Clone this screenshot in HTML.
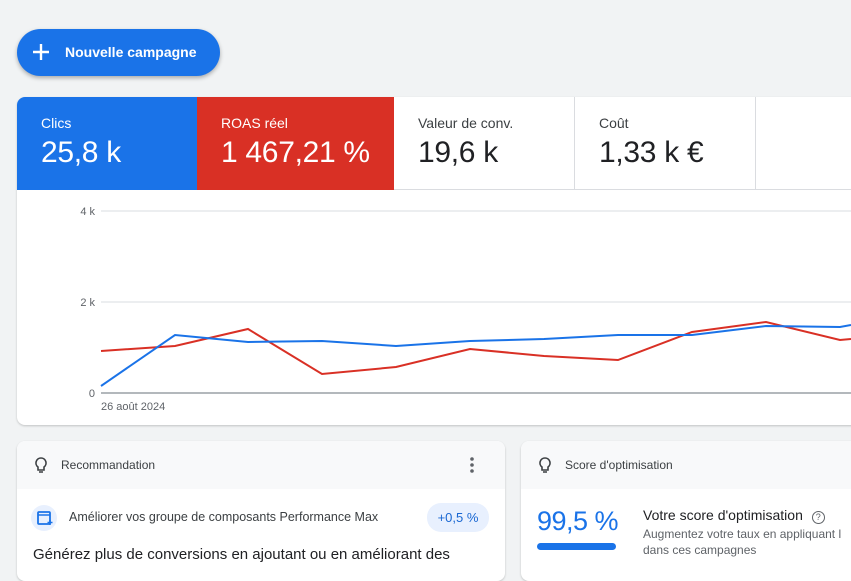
<!DOCTYPE html>
<html><head><meta charset="utf-8"><style>
*{box-sizing:border-box;margin:0;padding:0}
body{width:851px;height:564px;overflow:hidden;background:#f1f3f4;font-family:"Liberation Sans",Arial,sans-serif;position:relative}
.btn{position:absolute;left:17px;top:29px;width:203px;height:47px;border-radius:24px;background:#1a73e8;box-shadow:0 2px 4px rgba(0,0,0,.3);color:#fff;font-weight:bold;font-size:14px;line-height:47px;padding-left:48px}
.btn svg{position:absolute;left:15px;top:14px}
.card{position:absolute;left:17px;top:97px;width:850px;height:328px;background:#fff;border-radius:8px;overflow:hidden;box-shadow:0 1px 2px rgba(0,0,0,.2)}
.tile{position:absolute;top:0;height:93px;padding:18px 0 0 24px;border-right:1px solid #dadce0;border-bottom:1px solid #dadce0}
.tile .l{font-size:14px;color:#3c4043}
.tile .v{font-size:30px;color:#202124;margin-top:5px;letter-spacing:-0.3px}
.tile.c .l,.tile.c .v{color:#fff}
.small{position:absolute;background:#fff;border-radius:8px;overflow:hidden;box-shadow:0 1px 2px rgba(0,0,0,.2)}
.hd{height:48px;background:#f8f9fa;font-size:12px;color:#3c4043;line-height:48px;padding-left:44px;position:relative}
.hd svg{position:absolute;left:18px;top:16px}
</style></head><body>
<div class="btn"><svg width="18" height="18"><path d="M9 1v16M1 9h16" stroke="#fff" stroke-width="2.4"/></svg>Nouvelle campagne</div>
<div class="card">
<div class="tile c" style="left:0;width:180px;background:#1a73e8;border:none"><div class="l">Clics</div><div class="v">25,8 k</div></div>
<div class="tile c" style="left:180px;width:197px;background:#d93025;border:none"><div class="l">ROAS réel</div><div class="v">1 467,21 %</div></div>
<div class="tile" style="left:377px;width:181px"><div class="l">Valeur de conv.</div><div class="v">19,6 k</div></div>
<div class="tile" style="left:558px;width:181px"><div class="l">Coût</div><div class="v">1,33 k €</div></div>
<div class="tile" style="left:739px;width:120px"></div>
</div>
<svg style="position:absolute;left:0;top:0" width="851" height="430">
<g font-size="11" fill="#5f6368" font-family="Liberation Sans" text-anchor="end">
<text x="95" y="215">4 k</text><text x="95" y="306">2 k</text><text x="95" y="397">0</text></g>
<line x1="101" y1="211" x2="851" y2="211" stroke="#dadce0"/>
<line x1="101" y1="302" x2="851" y2="302" stroke="#dadce0"/>
<line x1="101" y1="393" x2="851" y2="393" stroke="#9aa0a6" stroke-width="1.5"/>
<text x="101" y="410" font-size="11" fill="#5f6368" font-family="Liberation Sans">26 août 2024</text>
<polyline fill="none" stroke="#d93025" stroke-width="2" points="101,351 175,346 248,329 322,374 396,367 470,349 544,356 618,360 692,332 766,322 840,340 851,339"/>
<polyline fill="none" stroke="#1a73e8" stroke-width="2" points="101,386 175,335 248,342 322,341 396,346 470,341 544,339 618,335 692,335 766,326 840,327 851,325"/>
</svg>
<div class="small" style="left:17px;top:441px;width:488px;height:140px">
<div class="hd"><svg width="12" height="18" viewBox="0 0 12 18"><path d="M6 1a5 5 0 0 0-3 9v3h6v-3a5 5 0 0 0-3-9z M4 15h4" fill="none" stroke="#3c4043" stroke-width="1.6"/></svg>Recommandation
<svg style="left:453px;top:16px" width="4" height="16"><circle cx="2" cy="2" r="1.8" fill="#5f6368"/><circle cx="2" cy="8" r="1.8" fill="#5f6368"/><circle cx="2" cy="14" r="1.8" fill="#5f6368"/></svg></div>
<div style="position:absolute;left:14px;top:64px;width:26px;height:26px;border-radius:50%;background:#e8f0fe"></div>
<svg style="position:absolute;left:20px;top:69px" width="16" height="16"><rect x="1" y="2" width="12" height="12" rx="1" fill="none" stroke="#1a73e8" stroke-width="1.8"/><path d="M1 5h12M13 10v5M10.5 12.5h5" stroke="#1a73e8" stroke-width="1.6"/></svg>
<div style="position:absolute;left:52px;top:69px;font-size:12.5px;color:#3c4043">Améliorer vos groupe de composants Performance Max</div>
<div style="position:absolute;left:410px;top:62px;width:62px;height:29px;border-radius:14px;background:#e8f0fe;color:#1967d2;font-size:13px;line-height:29px;text-align:center">+0,5 %</div>
<div style="position:absolute;left:16px;top:105px;font-size:15px;color:#202124">Générez plus de conversions en ajoutant ou en améliorant des</div>
</div>
<div class="small" style="left:521px;top:441px;width:400px;height:140px">
<div class="hd"><svg width="12" height="18" viewBox="0 0 12 18"><path d="M6 1a5 5 0 0 0-3 9v3h6v-3a5 5 0 0 0-3-9z M4 15h4" fill="none" stroke="#3c4043" stroke-width="1.6"/></svg>Score d'optimisation</div>
<div style="position:absolute;left:16px;top:65px;font-size:27px;color:#1a73e8;letter-spacing:-0.5px">99,5 %</div>
<div style="position:absolute;left:16px;top:102px;width:79px;height:7px;border-radius:4px;background:#1a73e8"></div>
<div style="position:absolute;left:122px;top:66px;font-size:14px;color:#202124">Votre score d'optimisation <span style="display:inline-block;width:13px;height:13px;border:1.5px solid #5f6368;border-radius:50%;font-size:9px;text-align:center;line-height:10px;color:#5f6368;margin-left:5px">?</span></div>
<div style="position:absolute;left:122px;top:85px;font-size:12px;color:#5f6368;line-height:16px;white-space:nowrap">Augmentez votre taux en appliquant l<br>dans ces campagnes</div>
</div>
</body></html>
